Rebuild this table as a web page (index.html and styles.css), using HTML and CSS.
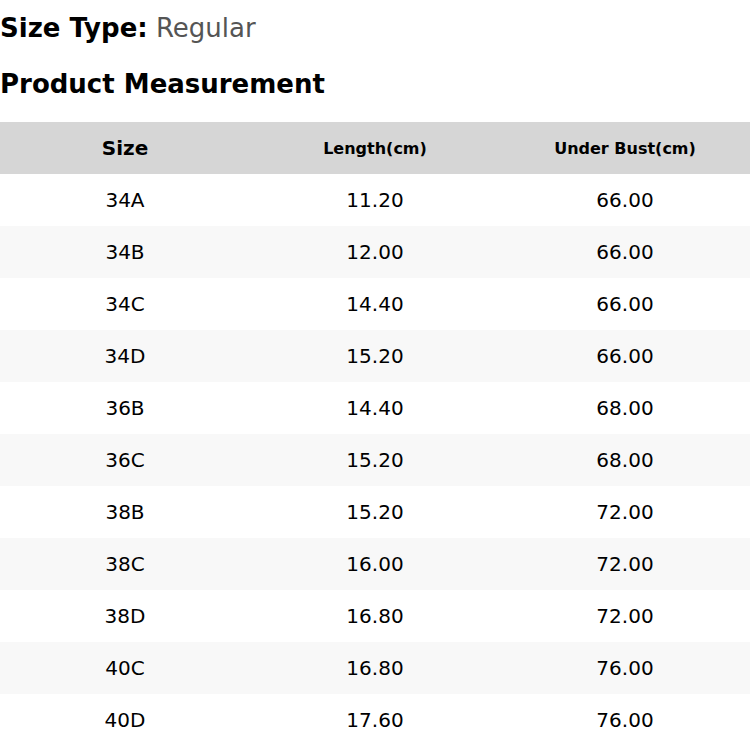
FILE: index.html
```html
<!DOCTYPE html>
<html>
<head>
<meta charset="utf-8">
<link rel="stylesheet" href="styles.css">
</head>
<body>
<div class="page">
  <div class="size-type"><span class="label">Size Type:</span> <span class="value">Regular</span></div>
  <h2 class="title">Product Measurement</h2>
  <table class="measure">
    <thead>
      <tr><th class="big">Size</th><th>Length(cm)</th><th>Under Bust(cm)</th></tr>
    </thead>
    <tbody>
      <tr><td>34A</td><td>11.20</td><td>66.00</td></tr>
      <tr><td>34B</td><td>12.00</td><td>66.00</td></tr>
      <tr><td>34C</td><td>14.40</td><td>66.00</td></tr>
      <tr><td>34D</td><td>15.20</td><td>66.00</td></tr>
      <tr><td>36B</td><td>14.40</td><td>68.00</td></tr>
      <tr><td>36C</td><td>15.20</td><td>68.00</td></tr>
      <tr><td>38B</td><td>15.20</td><td>72.00</td></tr>
      <tr><td>38C</td><td>16.00</td><td>72.00</td></tr>
      <tr><td>38D</td><td>16.80</td><td>72.00</td></tr>
      <tr><td>40C</td><td>16.80</td><td>76.00</td></tr>
      <tr><td>40D</td><td>17.60</td><td>76.00</td></tr>
    </tbody>
  </table>
</div>
</body>
</html>
```
FILE: styles.css
```css
html, body {
  margin: 0;
  padding: 0;
  background: #fff;
}
body {
  font-family: "DejaVu Sans", sans-serif;
  color: #000;
}
.page {
  width: 750px;
}
.size-type {
  font-size: 26px;
  line-height: 30px;
  padding-top: 13px;
  height: 43px;
  box-sizing: border-box;
}
.size-type .label {
  font-weight: bold;
}
.size-type .value {
  color: #555;
}
.title {
  margin: 0;
  font-size: 26px;
  line-height: 30px;
  padding-top: 26px;
  padding-bottom: 23px;
  font-weight: bold;
}
.measure {
  width: 750px;
  border-collapse: collapse;
  table-layout: fixed;
}
.measure th {
  background: #d6d6d6;
  height: 52px;
  padding: 0;
  font-size: 16px;
  font-weight: bold;
  text-align: center;
}
.measure th.big {
  font-size: 20px;
}
.measure td {
  height: 52px;
  padding: 0;
  font-size: 20px;
  text-align: center;
}
.measure tbody tr:nth-child(even) td {
  background: #f8f8f8;
}
```
